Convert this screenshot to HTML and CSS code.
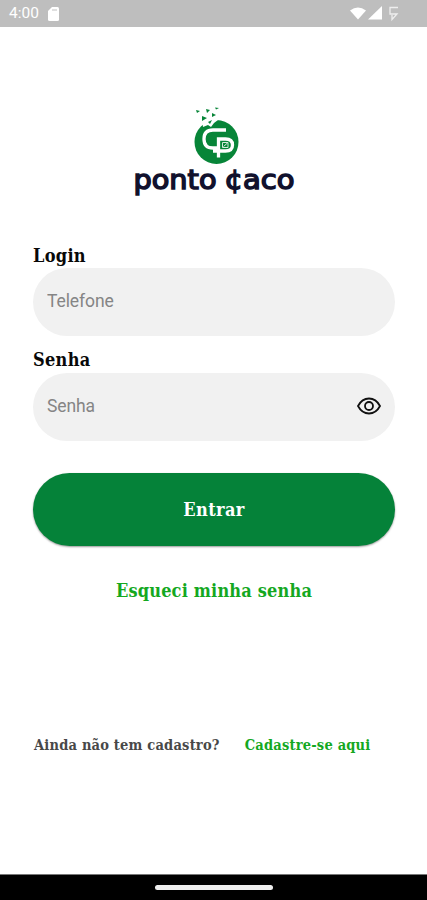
FILE: index.html
```html
<!DOCTYPE html>
<html lang="pt-BR">
<head>
<meta charset="utf-8">
<title>Ponto Caco</title>
<link rel="stylesheet" href="styles.css">
</head>
<body>
<div class="screen">
  <header class="status">
    <span class="time">4:00</span>
    <svg class="sd" width="11" height="14" viewBox="0 0 11 14"><path d="M4 0h5.500Q11 0 11 1.500v11Q11 14 9.500 14h-8Q0 14 0 12.500V4z" fill="#fff"/><path d="M4 3h5" stroke="#d4d4d4" stroke-width="1.500"/></svg>
    <svg class="signals" width="49" height="16" viewBox="0 0 49 16"><path d="M0 4.500Q8 -1.500 16 4.500L8 13.500z" fill="#fff"/><path d="M32 0v13.500H18z" fill="#fff"/><path d="M48 1.500H40v6.500h7L42 13.500V9" fill="none" stroke="#eee" stroke-width="1.300"/></svg>
  </header>
  <main class="content">
    <svg class="logo" width="170" height="100" viewBox="0 0 170 100">
      <circle cx="87.500" cy="42" r="22" fill="#078538"/>
      <path d="M73 20l7-3 9 3-4 3-3 4-3-2-5 2z" fill="#fff"/>
      <path d="M67 10l4 1-3 2zM77 9l4 1-3 3zM86 7.500l4 .5-3 1.500zM73 16l5 2-5 3zM83 13l4 2-4 2zM79 22l4-2-2 4z" fill="#078538"/>
      <path d="M97 30H84Q75 30 75 39t9 9h7M89.500 57.500V39h7q7 0 7 6t-7 6H84" fill="none" stroke="#fff" stroke-width="3.300"/>
      <path d="M93.500 42.500h5.500v5h-5.500zM94.500 46.500l4-3.500" fill="none" stroke="#d5eadc" stroke-width="1"/>
      <g class="wordmark"><text x="4.500" y="88.500" textLength="83" lengthAdjust="spacingAndGlyphs">ponto</text><text x="95.500" y="88.500" textLength="70" lengthAdjust="spacingAndGlyphs">¢aco</text></g>
    </svg>
    <label class="label" for="login">Login</label>
    <div class="field"><input id="login" placeholder="Telefone"></div>
    <label class="label second" for="senha">Senha</label>
    <div class="field"><input id="senha" type="password" placeholder="Senha">
      <svg class="eye" width="24" height="18" viewBox="0 0 24 18"><path d="M1 9Q5 1.500 12 1.500T23 9Q19 16.500 12 16.500T1 9z"/><circle cx="12" cy="9" r="4"/></svg>
    </div>
    <button class="enter"><span>Entrar</span></button>
    <a class="forgot">Esqueci minha senha</a>
    <p class="signup"><span class="question">Ainda não tem cadastro?</span><a class="register">Cadastre-se aqui</a></p>
  </main>
  <footer class="nav"><div class="handle"></div></footer>
</div>
</body>
</html>
```
FILE: styles.css
```css
* { box-sizing: border-box; }
body { margin: 0; background: #fff; font-family: "DejaVu Serif Condensed", "DejaVu Serif", serif; font-stretch: condensed; font-weight: bold; }
.screen { width: 427px; height: 900px; display: flex; flex-direction: column; overflow: hidden; }
.status { height: 27px; flex: none; background: #bebebe; display: flex; align-items: center; padding: 0 28px 0 9px; }
.time { font: 15.5px/27px Roboto, sans-serif; color: #fff; width: 39px; }
.signals { margin-left: auto; }
.content { flex: 1; display: flex; flex-direction: column; padding: 73px 32px 0 33px; }
.logo { align-self: center; flex: none; margin-right: 1px; }
.wordmark { font: 27px "DejaVu Sans", sans-serif; fill: #11112d; stroke: #11112d; stroke-width: 1.5; }
.label { font-size: 18px; letter-spacing: 0.3px; line-height: 23px; height: 24px; margin-top: 44px; color: #080808; }
.second { margin-top: 12px; height: 25px; }
.field { height: 68px; border-radius: 34px; background: #f1f1f1; display: flex; align-items: center; padding: 0 14px 2px; flex: none; }
.field input { flex: 1; min-width: 0; border: 0; padding: 0; outline: 0; background: none; font: 17.5px Roboto, sans-serif; letter-spacing: -0.1px; }
.field input::placeholder { color: #858585; }
.eye { fill: none; stroke: #111; stroke-width: 1.8; }
.enter { height: 73px; flex: none; margin-top: 32px; border: 0; border-radius: 36.5px; background: #058239; color: #fff; font: inherit; font-size: 18px; letter-spacing: 0.4px; box-shadow: 0 1px 2px #0006; }
.forgot { margin-top: 33px; text-align: center; font-size: 18px; letter-spacing: 0.17px; line-height: 24px; color: #14a81f; }
.signup { margin: 131px 0 0 1px; display: flex; gap: 25px; font-size: 14.5px; letter-spacing: 0.2px; line-height: 22px; white-space: nowrap; }
.question { color: #484848; }
.register { color: #14a81f; }
.nav { height: 26px; flex: none; background: #000; border-top: 1px solid #777; display: flex; justify-content: center; align-items: center; }
.handle { width: 118px; height: 5px; border-radius: 3px; background: #eee; }
```
